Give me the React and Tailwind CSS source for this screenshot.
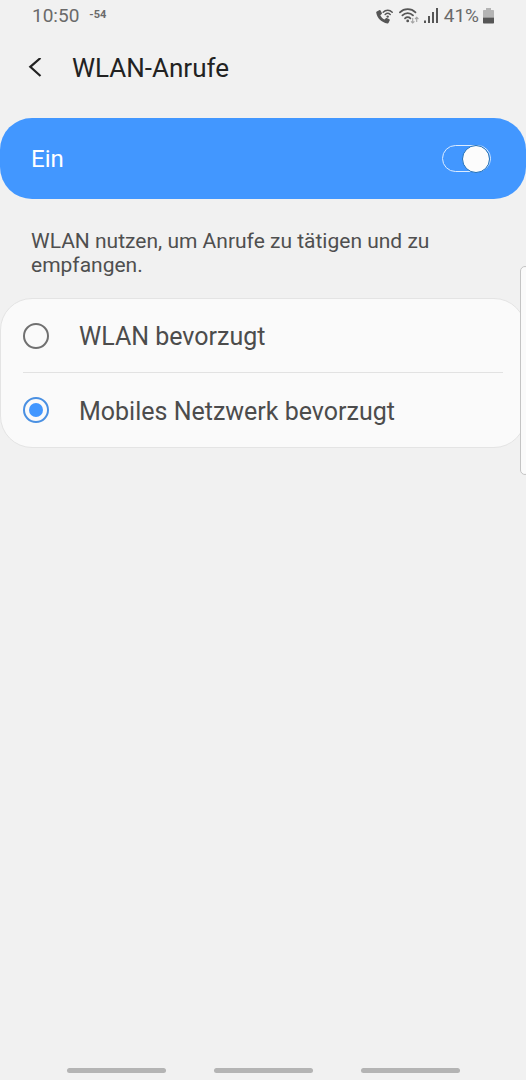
import React, { useState } from "react";

const options = [
  { id: "wifi", label: "WLAN bevorzugt" },
  { id: "mobile", label: "Mobiles Netzwerk bevorzugt" },
];

const CallIcon = () => (
  <svg width="17" height="17" viewBox="0 0 17 17" fill="none">
    <path
      d="M.8 3.400 3.600 2c.4-.2.8 0 1 .4l1.300 2.700c.2.4.1.8-.2 1L4.300 7.300c.9 1.900 2.200 3.200 4.200 4.200l1.300-1.300c.3-.3.6-.4 1-.2l2.600 1.300c.4.2.5.6.4 1l-1.200 2.500c-.2.5-.6.700-1.200.600C5.500 14.500 1.100 10.200.2 4.500c-.1-.5.1-.9.6-1.100Z"
      fill="#565656"
    />
    <path
      d="M7.200 4.200a6.400 6.400 0 0 1 9 0M9.200 6.500a3.600 3.600 0 0 1 5 0"
      stroke="#565656"
      strokeWidth="1.500"
      strokeLinecap="round"
    />
    <circle cx="11.700" cy="8.600" r="1.200" fill="#565656" />
  </svg>
);

const WifiIcon = () => (
  <svg width="21" height="17" viewBox="0 0 21 17" fill="none">
    <path
      d="M.9 4.300a11 11 0 0 1 15.600 0M3.400 7.400a7.300 7.300 0 0 1 10.600 0M6 10.300a3.900 3.900 0 0 1 5.400 0"
      stroke="#565656"
      strokeWidth="1.700"
      strokeLinecap="round"
    />
    <circle cx="8.700" cy="12.900" r="1.400" fill="#565656" />
    <path
      d="M13.700 10v5M12 13.300l1.700 1.700 1.700-1.700M17.700 14V9.200M16 11l1.700-1.700L19.400 11"
      stroke="#a3a3a3"
      strokeWidth="1.100"
    />
  </svg>
);

const SignalIcon = () => (
  <svg width="14" height="17" viewBox="0 0 14 17" fill="#565656">
    <rect x="0" y="12.500" width="2" height="2.500" />
    <rect x="4" y="8" width="2" height="7" />
    <rect x="8" y="4" width="2" height="11" />
    <rect x="12" y="0" width="2" height="15" />
  </svg>
);

const BatteryIcon = () => (
  <svg width="11" height="17" viewBox="0 0 11 17">
    <path
      d="M3 0h5v2h2c.6 0 1 .4 1 1v6.500H0V3c0-.6.400-1 1-1h2Z"
      fill="#b4b4b4"
    />
    <path d="M0 9.500h11v5c0 .6-.4 1-1 1H1c-.6 0-1-.4-1-1Z" fill="#565656" />
  </svg>
);

const StatusBar = () => (
  <div className="flex h-8 items-center justify-between pl-8 pr-8 text-[19px] text-[#6a6a6a]">
    <div className="flex items-center gap-2.5">
      <span>10:50</span>
      <span className="pb-0.5 text-[11px] font-bold">-54</span>
    </div>
    <div className="flex items-center gap-1">
      <CallIcon />
      <span className="ml-0.5 flex gap-1">
        <WifiIcon />
        <SignalIcon />
      </span>
      <span className="ml-0.5">41%</span>
      <BatteryIcon />
    </div>
  </div>
);

const App = () => {
  const [enabled, setEnabled] = useState(true);
  const [selected, setSelected] = useState("mobile");

  return (
    <div className="relative flex min-h-screen flex-col overflow-x-hidden bg-[#f1f1f1] font-[Roboto,sans-serif]">
      <StatusBar />

      <header className="flex h-[72px] items-center gap-7 pl-7">
        <button type="button" aria-label="Zurück">
          <svg width="16" height="20" viewBox="0 0 16 20" fill="none">
            <path d="M12.500 0 2.300 8.800l10.200 9.200" stroke="#222" strokeWidth="2.200" />
          </svg>
        </button>
        <h1 className="text-[26px] text-[#222222]">WLAN-Anrufe</h1>
      </header>

      <main className="mt-3.5">
        <label className="flex h-[81px] items-center justify-between rounded-[32px] bg-[#4297ff] pl-[31px] pr-[35px] text-2xl text-white">
          Ein
          {/* the thumb is the input's own pseudo element */}
          <input
            type="checkbox"
            role="switch"
            checked={enabled}
            onChange={(e) => setEnabled(e.target.checked)}
            className="flex h-[27px] w-[49px] appearance-none items-center rounded-full border border-[#dcecff] before:size-7 before:shrink-0 before:rounded-full before:border before:border-[#1f6fb8] before:bg-[#fcfcfc] checked:justify-end"
          />
        </label>

        <p className="mt-[30px] px-[31px] text-[21px] leading-6 text-[#4f4f4f]">
          WLAN nutzen, um Anrufe zu tätigen und zu empfangen.
        </p>

        <div className="mt-[21px] rounded-[32px] border border-[#e4e4e4] bg-[#fafafa] pl-[22px] pr-[22px]">
          {options.map((option) => (
            <label
              key={option.id}
              className="flex h-[74px] items-center gap-[30px] border-[#e2e2e2] text-[25px] text-[#4c4c4c] not-last:border-b"
            >
              <input
                type="radio"
                name="calling-preference"
                checked={selected === option.id}
                onChange={() => setSelected(option.id)}
                className="flex size-[26px] shrink-0 appearance-none items-center justify-center rounded-full border-2 border-[#707070] before:size-3.5 before:rounded-full checked:border-[#4a90e2] checked:before:bg-[#4297ff]"
              />
              <span className="pt-[3px]">{option.label}</span>
            </label>
          ))}
        </div>
      </main>

      {/* edge panel handle, lies over the list */}
      <div className="absolute -right-1 top-[266px] h-[209px] w-2.5 rounded-md border border-[#c4c4c4] bg-[#fafafa]" />

      <nav className="mt-auto flex justify-center gap-12 pb-[7px]">
        <button type="button" aria-label="Letzte Apps" className="h-[5px] w-[99px] rounded-full bg-[#b4b4b4]" />
        <button type="button" aria-label="Startseite" className="h-[5px] w-[99px] rounded-full bg-[#b4b4b4]" />
        <button type="button" aria-label="Zurück" className="h-[5px] w-[99px] rounded-full bg-[#b4b4b4]" />
      </nav>
    </div>
  );
};

export default App;
